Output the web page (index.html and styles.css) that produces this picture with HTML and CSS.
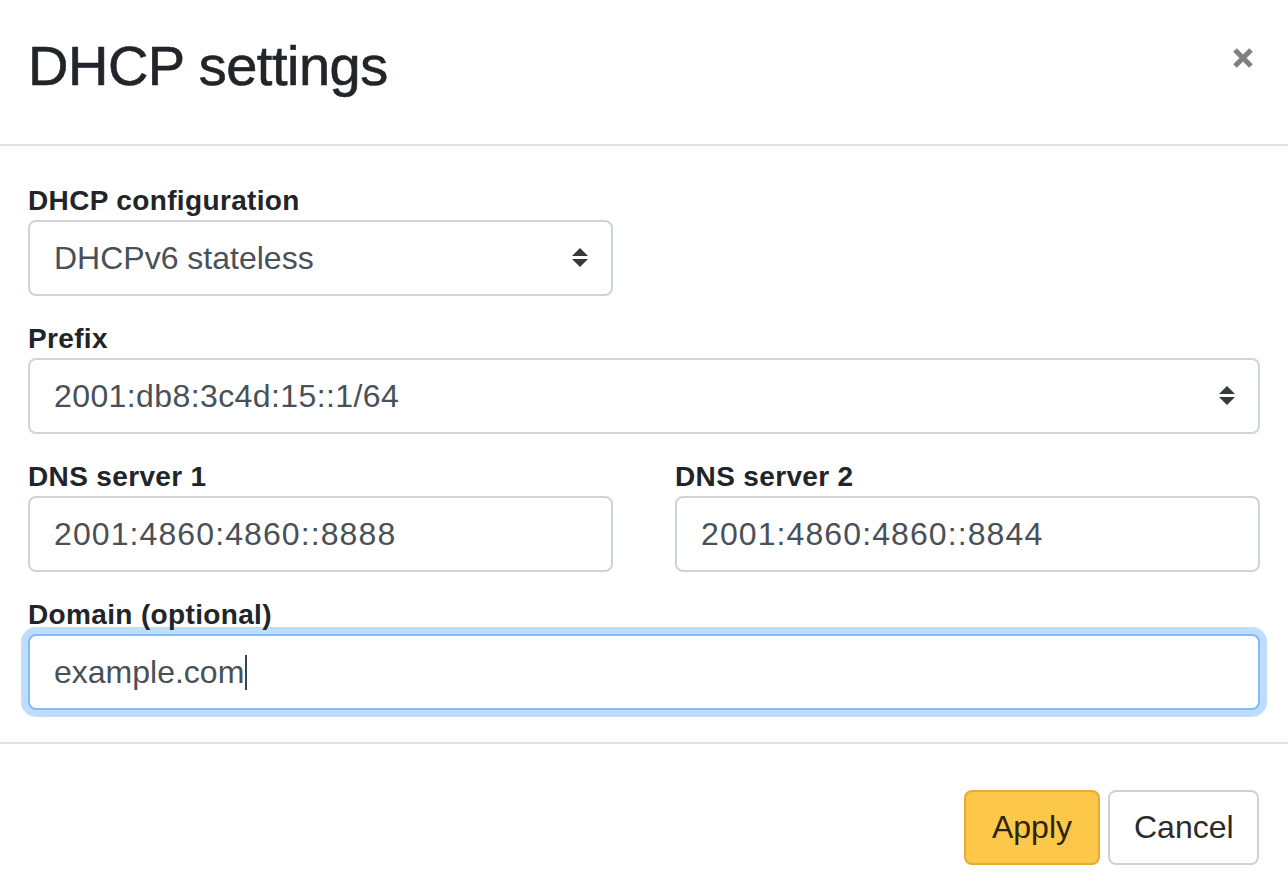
FILE: index.html
```html
<!DOCTYPE html>
<html lang="en">
<head>
<meta charset="utf-8">
<title>DHCP settings</title>
<link rel="stylesheet" href="styles.css">
</head>
<body>
<div class="modal">
  <header class="modal-header">
    <h1 class="modal-title">DHCP settings</h1>
    <button class="close" type="button" aria-label="Close">
      <svg width="22" height="22" viewBox="0 0 22 22"><path d="M3 3 L19 19 M19 3 L3 19" stroke="#808080" stroke-width="5.2" stroke-linecap="butt"/></svg>
    </button>
  </header>
  <div class="modal-body">
    <div class="form-group">
      <label class="label">DHCP configuration</label>
      <div class="select-wrap half">
        <select class="form-control"><option>DHCPv6 stateless</option></select>
        <svg class="select-arrows" width="16" height="20" viewBox="0 0 16 20"><path d="M0 8 L8 0 L16 8 Z M0 11 L16 11 L8 19 Z" fill="#343a40"/></svg>
      </div>
    </div>
    <div class="form-group">
      <label class="label">Prefix</label>
      <div class="select-wrap">
        <select class="form-control prefix"><option>2001:db8:3c4d:15::1/64</option></select>
        <svg class="select-arrows" width="16" height="20" viewBox="0 0 16 20"><path d="M0 8 L8 0 L16 8 Z M0 11 L16 11 L8 19 Z" fill="#343a40"/></svg>
      </div>
    </div>
    <div class="form-row form-group">
      <div class="col">
        <label class="label">DNS server 1</label>
        <input class="form-control ip" type="text" value="2001:4860:4860::8888">
      </div>
      <div class="col">
        <label class="label">DNS server 2</label>
        <input class="form-control ip" type="text" value="2001:4860:4860::8844">
      </div>
    </div>
    <div class="form-group last">
      <label class="label">Domain (optional)</label>
      <div class="form-control focused" role="textbox">example.com<span class="caret"></span></div>
    </div>
  </div>
  <footer class="modal-footer">
    <button class="btn btn-apply" type="button">Apply</button>
    <button class="btn btn-cancel" type="button">Cancel</button>
  </footer>
</div>
</body>
</html>
```

FILE: styles.css
```css
html, body {
  margin: 0;
  padding: 0;
  background: #ffffff;
}

body {
  font-family: "Liberation Sans", Arial, Helvetica, sans-serif;
  color: #212529;
}

.modal {
  width: 1288px;
  height: 892px;
  overflow: hidden;
  background: #ffffff;
}

.modal-header {
  display: flex;
  align-items: flex-start;
  justify-content: space-between;
  padding: 32px 28px 45px 28px;
  border-bottom: 2px solid #dee2e6;
}

.modal-title {
  margin: 0;
  font-size: 56px;
  line-height: 67px;
  font-weight: 400;
  letter-spacing: -0.5px;
  color: #212529;
  -webkit-text-stroke: 0.6px #212529;
}

.close {
  display: block;
  width: 22px;
  height: 22px;
  margin: 15px 6px 0 0;
  padding: 0;
  border: none;
  background: none;
  cursor: pointer;
}

.close svg {
  display: block;
}

.modal-body {
  padding: 38px 28px 32px 28px;
}

.form-group {
  margin-bottom: 26px;
}

.form-group.last {
  margin-bottom: 0;
}

.label {
  display: block;
  font-size: 28px;
  line-height: 34px;
  font-weight: 700;
  letter-spacing: 0.35px;
  color: #212529;
  margin-bottom: 2px;
}

.form-control {
  display: block;
  box-sizing: border-box;
  width: 100%;
  height: 76px;
  margin: 0;
  padding: 0 24px;
  font-family: "Liberation Sans", Arial, Helvetica, sans-serif;
  font-size: 32px;
  line-height: 72px;
  color: #495057;
  background: #ffffff;
  border: 2px solid #ced4da;
  border-radius: 8px;
  outline: none;
  -webkit-appearance: none;
  appearance: none;
}

select.form-control {
  padding-right: 60px;
}

.form-control.prefix {
  letter-spacing: 0.4px;
}

.form-control.ip {
  letter-spacing: 1.1px;
}

.select-wrap {
  position: relative;
}

.select-wrap.half {
  width: 585px;
}

.select-arrows {
  position: absolute;
  right: 25px;
  top: 28px;
  pointer-events: none;
}

.form-row {
  display: flex;
  gap: 62px;
}

.form-row .col {
  flex: 1 1 0;
  min-width: 0;
}

.form-control.focused {
  display: flex;
  align-items: center;
  border-color: #80bdff;
  box-shadow: 0 0 0 7px rgba(0, 123, 255, 0.25);
}

.caret {
  display: inline-block;
  width: 2px;
  height: 35px;
  margin-left: 1px;
  background: #3c4248;
}

.modal-footer {
  display: flex;
  justify-content: flex-end;
  gap: 8px;
  padding: 46px 29px 28px 28px;
  border-top: 2px solid #dee2e6;
}

.btn {
  box-sizing: border-box;
  height: 75px;
  padding: 0 24px;
  font-family: "Liberation Sans", Arial, Helvetica, sans-serif;
  font-size: 32px;
  line-height: 71px;
  border-radius: 8px;
  border: 2px solid transparent;
  color: #212529;
  cursor: pointer;
}

.btn-apply {
  width: 136px;
  background: #fdc84a;
  border-color: #e5ad33;
  color: #2a2410;
}

.btn-cancel {
  width: 151px;
  background: #ffffff;
  border-color: #d0d0d0;
  color: #2b2b2b;
}
```
